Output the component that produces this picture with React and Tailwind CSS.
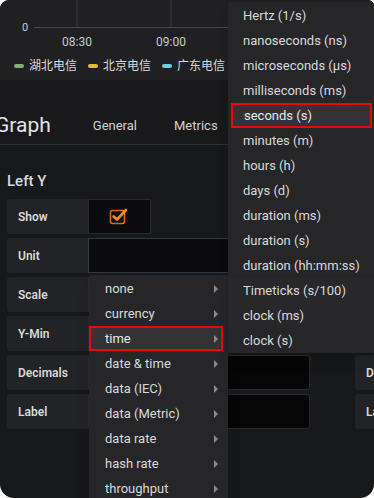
const UNIT_GROUPS = [
  "none",
  "currency",
  "time",
  "date & time",
  "data (IEC)",
  "data (Metric)",
  "data rate",
  "hash rate",
  "throughput",
];

const TIME_UNITS = [
  "Hertz (1/s)",
  "nanoseconds (ns)",
  "microseconds (µs)",
  "milliseconds (ms)",
  "seconds (s)",
  "minutes (m)",
  "hours (h)",
  "days (d)",
  "duration (ms)",
  "duration (s)",
  "duration (hh:mm:ss)",
  "Timeticks (s/100)",
  "clock (ms)",
  "clock (s)",
];

const LEGEND = [
  { name: "湖北电信", color: "bg-[#7eb26d]" },
  { name: "北京电信", color: "bg-[#eab839]" },
  { name: "广东电信", color: "bg-[#6ed0e0]" },
];

export default function App() {
  return (
    <div className="w-[374px] h-[498px] bg-white overflow-hidden font-['Roboto','Noto_Sans_CJK_SC',sans-serif]">
      <div className="relative w-full h-full bg-[#17181a] rounded-tl-[9px] rounded-tr-[6px] rounded-b-[14px] overflow-hidden">
        <ChartPanel />
        <Tabs />
        <AxisEditor />
        <GroupMenu />
        <TimeMenu />
      </div>
    </div>
  );
}

function ChartPanel() {
  return (
    <div className="h-[80px] bg-[#202023]">
      <svg width="374" height="50" className="block">
        <line x1="77" y1="0" x2="77" y2="27" stroke="#3d3d40" />
        <line x1="171" y1="0" x2="171" y2="27" stroke="#3d3d40" />
        <line x1="34" y1="27.5" x2="374" y2="27.5" stroke="#48484b" />
        <text x="25" y="31" fill="#c8c8c9" fontSize="11" textAnchor="middle" fontFamily="Roboto, sans-serif">0</text>
        <text x="77" y="45.5" fill="#c8c8c9" fontSize="12" textAnchor="middle" fontFamily="Roboto, sans-serif">08:30</text>
        <text x="171" y="45.5" fill="#c8c8c9" fontSize="12" textAnchor="middle" fontFamily="Roboto, sans-serif">09:00</text>
      </svg>
      <div className="flex items-center pl-[14px] mt-[9px] h-[14px]">
        {LEGEND.map((l) => (
          <div key={l.name} className="flex items-center mr-[11px]">
            <span className={`w-[10px] h-[4px] rounded-[2px] ${l.color}`} />
            <span className="ml-[5px] text-[12px] leading-[14px] text-[#d8d9da]">{l.name}</span>
          </div>
        ))}
      </div>
    </div>
  );
}

function Tabs() {
  return (
    <div className="h-[65px] border-b border-[#303033] bg-[#19191c] flex items-center pt-[26px]">
      <span className="ml-[-5px] text-[21px] leading-[24px] text-[#e3e3e4]">Graph</span>
      <span className="ml-[42px] text-[13px] leading-[16px] text-[#d0d1d2] mt-[2px]">General</span>
      <span className="ml-[37px] text-[13px] leading-[16px] text-[#d0d1d2] mt-[2px]">Metrics</span>
    </div>
  );
}

function Label({ children }) {
  return (
    <div className="w-[81px] h-[35px] shrink-0 bg-[#222327] rounded-l-[3px] flex items-center pl-[11px] text-[12px] font-semibold text-[#d8d9da] whitespace-nowrap">
      {children}
    </div>
  );
}

function AxisEditor() {
  return (
    <div className="pl-[7px] pt-[27px]">
      <div className="text-[15px] leading-[18px] text-[#d8d9da] font-medium mb-[9px]">Left Y</div>
      <div className="flex flex-col gap-[4px]">
        <div className="flex">
          <Label>Show</Label>
          <div className="w-[63px] h-[35px] shrink-0 bg-[#0b0b0d] border border-[#2a2b2e] flex items-center justify-center">
            <CheckIcon />
          </div>
        </div>
        <div className="flex">
          <Label>Unit</Label>
          <div className="w-[222px] h-[35px] shrink-0 bg-[#0b0b0d] border border-[#2d3b49]" />
        </div>
        <div className="flex">
          <Label>Scale</Label>
          <div className="w-[222px] h-[35px] shrink-0 bg-[#0b0b0d] border border-[#2a2b2e]" />
        </div>
        <div className="flex">
          <Label>Y-Min</Label>
          <div className="w-[222px] h-[35px] shrink-0 bg-[#0b0b0d] border border-[#2a2b2e]" />
        </div>
        <div className="flex">
          <Label>Decimals</Label>
          <div className="w-[222px] h-[35px] shrink-0 bg-[#060607] border border-[#2a2b2e] rounded-r-[3px]" />
          <div className="ml-[45px] shrink-0">
            <Label>Decimals</Label>
          </div>
        </div>
        <div className="flex">
          <Label>Label</Label>
          <div className="w-[222px] h-[35px] shrink-0 bg-[#060607] border border-[#2a2b2e] rounded-r-[3px]" />
          <div className="ml-[45px] shrink-0">
            <Label>Label</Label>
          </div>
        </div>
      </div>
    </div>
  );
}

function CheckIcon() {
  return (
    <svg width="20" height="18" viewBox="0 0 20 18" className="ml-[-1px] mt-[-2px]">
      <rect x="1.5" y="3.5" width="14" height="13" rx="2" fill="none" stroke="#e4650f" strokeWidth="1.6" />
      <path d="M4.5 9.5 L8 12.5 L17 3" fill="none" stroke="#f58a1f" strokeWidth="2.6" strokeLinecap="round" strokeLinejoin="round" />
    </svg>
  );
}

function Arrow() {
  return <span className="w-0 h-0 border-y-[4px] border-y-transparent border-l-[4px] border-l-[#8a8a8c]" />;
}

function GroupMenu() {
  return (
    <div className="absolute left-[89px] top-[275px] w-[139px] bg-[#262629] pt-[1px] pb-[10px] shadow-lg">
      {UNIT_GROUPS.map((g) =>
        g === "time" ? (
          <div key={g} className="mr-[5px] h-[25px] flex items-center pl-[14px] pr-[3px] border-2 border-[#e8070b] bg-[#333336] text-[13px] text-[#e6e6e7]">
            <span className="flex-1">{g}</span>
            <Arrow />
          </div>
        ) : (
          <div key={g} className="h-[25px] flex items-center pl-[16px] pr-[10px] text-[13px] text-[#d8d9da]">
            <span className="flex-1">{g}</span>
            <Arrow />
          </div>
        )
      )}
    </div>
  );
}

function TimeMenu() {
  return (
    <div className="absolute left-[228px] top-[2px] w-[146px] h-[351px] bg-[#262629] rounded-tl-[4px] pt-[1px] shadow-lg">
      {TIME_UNITS.map((u, i) =>
        u === "seconds (s)" ? (
          <div key={u} className="ml-[3px] mr-[2px] h-[25px] flex items-center pl-[11px] border-2 border-[#e8070b] bg-[#333336] text-[13px] text-[#e6e6e7]">
            {u}
          </div>
        ) : (
          <div
            key={u}
            className={`h-[25px] flex items-center pl-[15px] text-[13px] text-[#d8d9da] ${i === 11 || i === 12 ? "bg-[#28282b]" : ""}`}
          >
            {u}
          </div>
        )
      )}
    </div>
  );
}
